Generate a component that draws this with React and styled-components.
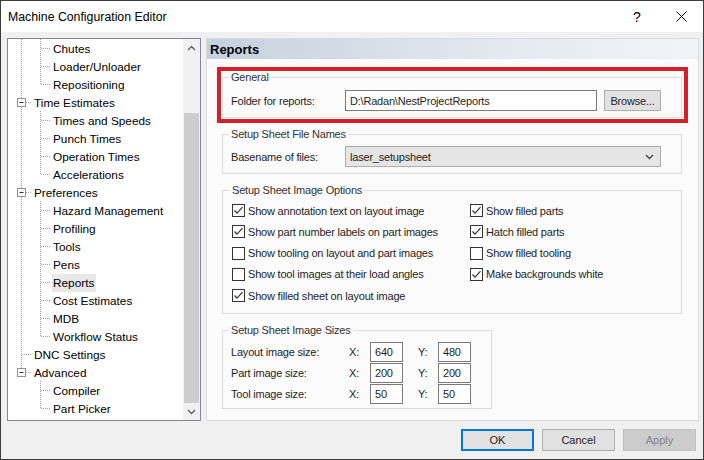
import React from 'react';
import styled, { createGlobalStyle } from 'styled-components';

const GlobalStyle = createGlobalStyle`
  html, body {
    margin: 0;
    padding: 0;
    background: #ffffff;
  }
  * {
    box-sizing: border-box;
  }
`;

const Window = styled.div`
  width: 704px;
  height: 460px;
  border: 1px solid #3c3c3c;
  display: flex;
  flex-direction: column;
  font-family: "Liberation Sans", Arial, sans-serif;
  color: #000;
  background: #f0f0f0;
  overflow: hidden;
`;

const TitleBar = styled.div`
  height: 31px;
  flex: none;
  display: flex;
  align-items: center;
  background: #ffffff;
  padding-left: 7px;
  font-size: 12.3px;
`;

const TitleText = styled.div`
  flex: 1;
`;

const TitleButton = styled.div`
  width: 44px;
  height: 31px;
  display: flex;
  align-items: center;
  justify-content: center;
  font-size: 14px;
`;

const Main = styled.div`
  flex: 1;
  display: flex;
  gap: 5px;
  padding: 6px 5px 0 6px;
  min-height: 0;
`;

const TreeBox = styled.div`
  width: 194px;
  height: 383px;
  flex: none;
  border: 1px solid #828790;
  background: #ffffff;
  display: flex;
`;

const TreeList = styled.div`
  flex: 1;
  overflow: hidden;
  font-size: 11.8px;
`;

const TreeRow = styled.div`
  height: 18px;
  display: flex;
  align-items: center;
  white-space: nowrap;
`;

const TreeLabel = styled.span`
  padding: 2px 2px 1px 1px;
  margin-top: 2px;
  background: ${(p) => (p.$selected ? '#e8e8e8' : 'transparent')};
  line-height: 15px;
`;

const Scrollbar = styled.div`
  width: 17px;
  flex: none;
  background: #f0f0f0;
  display: flex;
  flex-direction: column;
`;

const ScrollArrow = styled.div`
  height: 17px;
  flex: none;
  display: flex;
  align-items: center;
  justify-content: center;
`;

const ScrollTrack = styled.div`
  flex: 1;
  display: flex;
  flex-direction: column;
  padding: 57px 1px 0 1px;
`;

const ScrollThumb = styled.div`
  flex: 1;
  background: #cdcdcd;
`;

const Panel = styled.div`
  flex: 1;
  height: 383px;
  border: 1px solid #dadada;
  background: #fbfbfb;
  display: flex;
  flex-direction: column;
`;

const PanelHeader = styled.div`
  height: 20px;
  flex: none;
  display: flex;
  align-items: center;
  padding-left: 3px;
  font-size: 13px;
  font-weight: bold;
  background: linear-gradient(to right, #c5d1de, #e3e9ef 60%, #f2f4f6);
`;

const PanelBody = styled.div`
  padding: 11px 16px 0 15px;
  display: flex;
  flex-direction: column;
  align-items: flex-start;
  font-size: 11px;
  letter-spacing: -0.2px;
  color: #1e1e1e;
`;

const Group = styled.fieldset`
  margin: ${(p) => p.$gap || 0}px 0 0 0;
  padding: ${(p) => p.$pad || '6px 8px 6px 8px'};
  border: 1px solid #dcdcdc;
  width: ${(p) => p.$width || 460}px;
  min-width: 0;
  position: relative;

  ${(p) =>
    p.$highlight &&
    `
    &::after {
      content: '';
      position: absolute;
      top: -17px;
      left: -6px;
      right: -7px;
      bottom: -6px;
      border: 4px solid #d5202b;
      pointer-events: none;
    }
  `}
`;

const Legend = styled.legend`
  padding: 0 2px;
  margin-left: -2px;
  line-height: 14px;
  color: #333;
`;

const FieldRow = styled.div`
  display: flex;
  align-items: center;
  height: 21px;
`;

const FieldLabel = styled.div`
  width: ${(p) => p.$width}px;
  flex: none;
`;

const TextBox = styled.div`
  width: ${(p) => p.$width}px;
  height: ${(p) => p.$height || 21}px;
  border: 1px solid #7a7a7a;
  background: #ffffff;
  display: flex;
  align-items: center;
  padding-left: 4px;
  flex: none;
`;

const SmallButton = styled.div`
  margin-left: 7px;
  width: 57px;
  height: 21px;
  border: 1px solid #adadad;
  background: #e1e1e1;
  display: flex;
  align-items: center;
  justify-content: center;
`;

const ComboBox = styled.div`
  width: 316px;
  height: 21px;
  border: 1px solid #adadad;
  background: #e5e5e5;
  display: flex;
  align-items: center;
  justify-content: space-between;
  padding: 0 6px 0 4px;
`;

const CheckGrid = styled.div`
  display: grid;
  grid-template-columns: 238px 1fr;
  grid-auto-rows: 21.25px;
`;

const CheckItem = styled.div`
  display: flex;
  align-items: center;
  gap: 3px;
  white-space: nowrap;
`;

const CheckBoxFrame = styled.div`
  width: 13px;
  height: 13px;
  border: 1px solid #333333;
  background: #ffffff;
  display: flex;
  align-items: center;
  justify-content: center;
  flex: none;
`;

const SizeRow = styled.div`
  display: grid;
  grid-template-columns: 118px 21px 33px 15px 20px 33px;
  align-items: center;
  height: 21px;
`;

const Footer = styled.div`
  height: 38px;
  flex: none;
  display: flex;
  justify-content: flex-end;
  align-items: flex-start;
  gap: 8px;
  padding: 8px 7px 0 0;
`;

const DialogButton = styled.div`
  width: 73px;
  height: 22px;
  display: flex;
  align-items: center;
  justify-content: center;
  font-size: 11px;
  border: ${(p) => (p.$default ? '2px solid #0078d7' : '1px solid #adadad')};
  background: ${(p) => (p.$disabled ? '#cccccc' : '#e1e1e1')};
  color: ${(p) => (p.$disabled ? '#838383' : '#1e1e1e')};
  ${(p) => p.$disabled && 'border-color: #bfbfbf;'}
`;

const treeItems = [
  { label: 'Chutes', level: 2 },
  { label: 'Loader/Unloader', level: 2 },
  { label: 'Repositioning', level: 2, last: true },
  { label: 'Time Estimates', level: 1, box: true },
  { label: 'Times and Speeds', level: 2 },
  { label: 'Punch Times', level: 2 },
  { label: 'Operation Times', level: 2 },
  { label: 'Accelerations', level: 2, last: true },
  { label: 'Preferences', level: 1, box: true },
  { label: 'Hazard Management', level: 2 },
  { label: 'Profiling', level: 2 },
  { label: 'Tools', level: 2 },
  { label: 'Pens', level: 2 },
  { label: 'Reports', level: 2, selected: true },
  { label: 'Cost Estimates', level: 2 },
  { label: 'MDB', level: 2 },
  { label: 'Workflow Status', level: 2, last: true },
  { label: 'DNC Settings', level: 1 },
  { label: 'Advanced', level: 1, box: true, last: true },
  { label: 'Compiler', level: 2, parentLast: true },
  { label: 'Part Picker', level: 2, last: true, parentLast: true },
];

const checks = [
  ['Show annotation text on layout image', true],
  ['Show filled parts', true],
  ['Show part number labels on part images', true],
  ['Hatch filled parts', true],
  ['Show tooling on layout and part images', false],
  ['Show filled tooling', false],
  ['Show tool images at their load angles', false],
  ['Make backgrounds white', true],
  ['Show filled sheet on layout image', true],
];

const sizes = [
  ['Layout image size:', '640', '480'],
  ['Part image size:', '200', '200'],
  ['Tool image size:', '50', '50'],
];

const dots = { stroke: '#a0a0a0', strokeWidth: 1, strokeDasharray: '1 1' };

const TreeGuide = ({ item }) => {
  if (item.level === 1) {
    return (
      <svg width="25" height="18" style={{ flex: 'none' }}>
        <line x1="13.5" y1="0" x2="13.5" y2={item.last ? 9 : 18} {...dots} />
        <line x1="14" y1="9.5" x2="24" y2="9.5" {...dots} />
        {item.box && (
          <g>
            <rect x="9.5" y="5.5" width="8" height="8" fill="#fff" stroke="#919191" />
            <line x1="11.5" y1="9.5" x2="15.5" y2="9.5" stroke="#333" />
          </g>
        )}
      </svg>
    );
  }
  return (
    <svg width="44" height="18" style={{ flex: 'none' }}>
      {!item.parentLast && <line x1="13.5" y1="0" x2="13.5" y2="18" {...dots} />}
      <line x1="32.5" y1="0" x2="32.5" y2={item.last ? 9 : 18} {...dots} />
      <line x1="33" y1="9.5" x2="43" y2="9.5" {...dots} />
    </svg>
  );
};

const Chevron = ({ up, color = '#606060' }) => (
  <svg width="9" height="6" viewBox="0 0 9 6">
    <polyline
      points={up ? '1,5 4.5,1.5 8,5' : '1,1 4.5,4.5 8,1'}
      fill="none"
      stroke={color}
      strokeWidth="1.4"
    />
  </svg>
);

const CheckBox = ({ checked }) => (
  <CheckBoxFrame>
    {checked && (
      <svg width="11" height="11" viewBox="0 0 11 11">
        <polyline points="1.5,5.5 4,8.2 9.5,2.2" fill="none" stroke="#333" strokeWidth="1.2" />
      </svg>
    )}
  </CheckBoxFrame>
);

export default function App() {
  return (
    <>
      <GlobalStyle />
      <Window>
        <TitleBar>
          <TitleText>Machine Configuration Editor</TitleText>
          <TitleButton>?</TitleButton>
          <TitleButton>
            <svg width="11" height="11" viewBox="0 0 11 11">
              <line x1="0.5" y1="0.5" x2="10.5" y2="10.5" stroke="#000" strokeWidth="1" />
              <line x1="10.5" y1="0.5" x2="0.5" y2="10.5" stroke="#000" strokeWidth="1" />
            </svg>
          </TitleButton>
        </TitleBar>
        <Main>
          <TreeBox>
            <TreeList>
              {treeItems.map((item) => (
                <TreeRow key={item.label}>
                  <TreeGuide item={item} />
                  <TreeLabel $selected={item.selected}>{item.label}</TreeLabel>
                </TreeRow>
              ))}
            </TreeList>
            <Scrollbar>
              <ScrollArrow>
                <Chevron up />
              </ScrollArrow>
              <ScrollTrack>
                <ScrollThumb />
              </ScrollTrack>
              <ScrollArrow>
                <Chevron />
              </ScrollArrow>
            </Scrollbar>
          </TreeBox>
          <Panel>
            <PanelHeader>Reports</PanelHeader>
            <PanelBody>
              <Group $highlight>
                <Legend>General</Legend>
                <FieldRow>
                  <FieldLabel $width={114}>Folder for reports:</FieldLabel>
                  <TextBox $width={252}>D:\Radan\NestProjectReports</TextBox>
                  <SmallButton>Browse...</SmallButton>
                </FieldRow>
              </Group>
              <Group $gap={9} $pad="5px 8px 6px 8px">
                <Legend>Setup Sheet File Names</Legend>
                <FieldRow>
                  <FieldLabel $width={114}>Basename of files:</FieldLabel>
                  <ComboBox>
                    <span>laser_setupsheet</span>
                    <Chevron color="#444" />
                  </ComboBox>
                </FieldRow>
              </Group>
              <Group $gap={9} $pad="3px 8px 7px 9px">
                <Legend>Setup Sheet Image Options</Legend>
                <CheckGrid>
                  {checks.map(([label, checked]) => (
                    <CheckItem key={label}>
                      <CheckBox checked={checked} />
                      {label}
                    </CheckItem>
                  ))}
                </CheckGrid>
              </Group>
              <Group $gap={9} $width={270} $pad="4px 8px 4px 8px">
                <Legend>Setup Sheet Image Sizes</Legend>
                {sizes.map(([label, x, y]) => (
                  <SizeRow key={label}>
                    <span>{label}</span>
                    <span>X:</span>
                    <TextBox $width={33} $height={20}>{x}</TextBox>
                    <span />
                    <span>Y:</span>
                    <TextBox $width={33} $height={20}>{y}</TextBox>
                  </SizeRow>
                ))}
              </Group>
            </PanelBody>
          </Panel>
        </Main>
        <Footer>
          <DialogButton $default>OK</DialogButton>
          <DialogButton>Cancel</DialogButton>
          <DialogButton $disabled>Apply</DialogButton>
        </Footer>
      </Window>
    </>
  );
}
